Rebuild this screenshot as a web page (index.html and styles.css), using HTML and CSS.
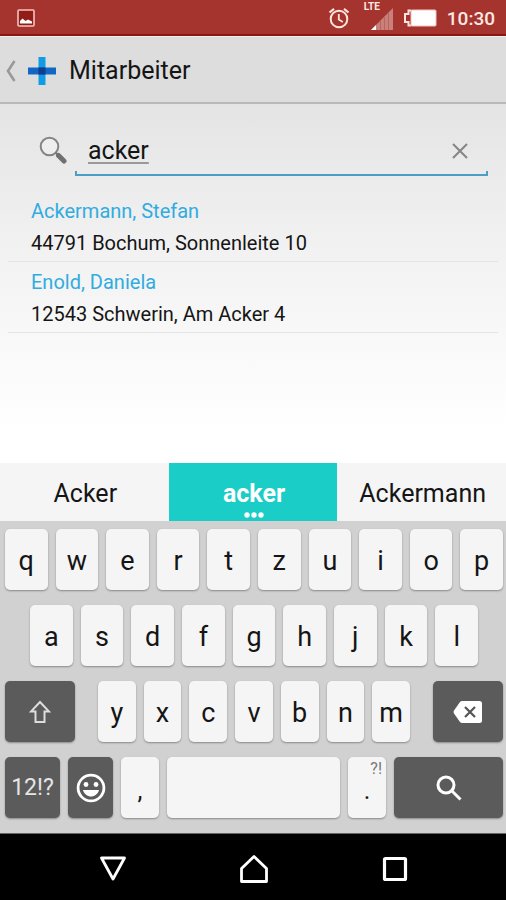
FILE: index.html
```html
<!DOCTYPE html>
<html lang="de">
<head>
<meta charset="utf-8">
<meta name="viewport" content="width=device-width, initial-scale=1">
<title>Mitarbeiter</title>
<link rel="stylesheet" href="styles.css">
</head>
<body>
<div class="status">
  <svg class="status-photo" width="18" height="18" viewBox="0 0 18 18" aria-hidden="true"><rect x="1" y="1" width="16" height="16" rx="1" fill="#921d18" stroke="#f3c4bd" stroke-width="1.6"/><path d="M3 14.500V12l2.500-2.500 3 2.500 2.500-1.500 4 2v2z" fill="#fff"/></svg>
  <div class="status-right">
    <svg width="22" height="22" viewBox="0 0 22 22" fill="none" stroke="#ffe3dc" aria-hidden="true"><circle cx="11" cy="12" r="8.300" stroke-width="2"/><path d="M10.800 7v5.500l4 2.500" stroke-width="1.800"/><path d="M1.500 5.500 6 1.800M20.500 5.500 16 1.800" stroke-width="2.200"/></svg>
    <div class="signal">
      <span class="lte">LTE</span>
      <svg width="22" height="22" viewBox="0 0 22 22" aria-hidden="true"><path d="M0 22 22 0v22z" fill="#c9807a"/><path d="M0 22l5-5v5z" fill="#fff"/><path d="M9.500 12v10M13.500 8v14M17.500 4v18" stroke="#b9655f" stroke-width="1"/></svg>
    </div>
    <svg width="34" height="18" viewBox="0 0 34 18" aria-hidden="true"><path d="M8 1.500H5.500V5H2v8h3.500v3.500H8" fill="none" stroke="#ffe3dc" stroke-width="2"/><rect x="8" y="1" width="25" height="16" rx="1" fill="#fff" stroke="#f3c4bd"/></svg>
    <span class="clock">10:30</span>
  </div>
</div>
<header class="bar">
  <button class="back" aria-label="Zurück"><svg width="12" height="24" viewBox="0 0 12 24"><path d="M9.500 2 3 12l6.500 10" fill="none" stroke="#999" stroke-width="2.600"/></svg></button>
  <svg width="28" height="28" viewBox="0 0 28 28" aria-hidden="true"><path d="M10.500 0h7v28h-7z" fill="#109ce4"/><path d="M0 10.500h28v7H0z" fill="#1168c4"/><path d="M10.500 10.500h7v7h-7z" fill="#123c8c"/></svg>
  <h1>Mitarbeiter</h1>
</header>
<main>
  <form class="search">
    <label for="q" aria-label="Suche"><svg width="28" height="28" viewBox="0 0 28 28"><circle cx="10.500" cy="10.500" r="8.800" fill="#eee" stroke="#858585" stroke-width="2"/><path d="m16.500 16.500 4 4" stroke="#777" stroke-width="2"/><path d="m19.500 19.500 5.500 5.500" stroke="#707070" stroke-width="5" stroke-linecap="round"/></svg></label>
    <div class="field">
      <input id="q" type="text" value="acker">
      <button type="button" class="clear" aria-label="Löschen"><svg width="18" height="18" viewBox="0 0 18 18"><path d="m2 2 14 14M16 2 2 16" stroke="#858585" stroke-width="2"/></svg></button>
    </div>
  </form>
  <ul class="results">
    <li><a href="#">Ackermann, Stefan</a><span>44791 Bochum, Sonnenleite 10</span></li>
    <li><a href="#">Enold, Daniela</a><span>12543 Schwerin, Am Acker 4</span></li>
  </ul>
</main>
<div class="suggest">
  <button>Acker</button>
  <button class="active">acker<svg class="dots" width="20" height="6" viewBox="0 0 20 6" fill="#fff" aria-hidden="true"><circle cx="3" cy="3" r="2.700"/><circle cx="10" cy="3" r="2.700"/><circle cx="17" cy="3" r="2.700"/></svg></button>
  <button>Ackermann</button>
</div>
<div class="keyboard">
  <div class="row row-top"><button>q</button><button>w</button><button>e</button><button>r</button><button>t</button><button>z</button><button>u</button><button>i</button><button>o</button><button>p</button></div>
  <div class="row row-home"><button>a</button><button>s</button><button>d</button><button>f</button><button>g</button><button>h</button><button>j</button><button>k</button><button>l</button></div>
  <div class="row row-shift">
    <button class="dark" aria-label="Umschalt"><svg width="22" height="24" viewBox="0 0 22 24"><path d="M11 2 2 11.500h4.500V22h9V11.500H20z" fill="none" stroke="#ddd" stroke-width="2"/></svg></button>
    <div class="letters"><button>y</button><button>x</button><button>c</button><button>v</button><button>b</button><button>n</button><button>m</button></div>
    <button class="dark" aria-label="Rücktaste"><svg width="30" height="24" viewBox="0 0 30 24"><path d="M9 1h17.500Q29 1 29 3.500v17Q29 23 26.500 23H9Q8 23 7 22L1 13.500Q0 12 1 10.500L7 2Q8 1 9 1z" fill="#fff"/><path d="m12 7 10 10M22 7 12 17" stroke="#555" stroke-width="2.200"/></svg></button>
  </div>
  <div class="row row-bottom">
    <button class="dark numbers">12!?</button>
    <button class="dark" aria-label="Emoji"><svg width="30" height="30" viewBox="0 0 30 30"><circle cx="15" cy="15" r="12.900" fill="none" stroke="#fff" stroke-width="2.800"/><circle cx="10" cy="11.500" r="2.400" fill="#fff"/><circle cx="20" cy="11.500" r="2.400" fill="#fff"/><path d="M7 17h16c-1 4-4.500 6.500-8 6.500S8 21 7 17z" fill="#fff"/></svg></button>
    <button class="mark">,</button>
    <button aria-label="Leerzeichen"></button>
    <button class="mark period">.<small>?!</small></button>
    <button class="dark" aria-label="Suchen"><svg width="28" height="28" viewBox="0 0 28 28" fill="none" stroke="#fff" stroke-width="3"><circle cx="11" cy="11" r="8"/><path d="m16.500 16.500 9 9"/></svg></button>
  </div>
</div>
<nav class="nav">
  <button aria-label="Zurück"><svg width="28" height="28" viewBox="0 0 28 28"><path d="M2.500 3h23L14 24z" fill="none" stroke="#fff" stroke-width="2.800" stroke-linejoin="round"/></svg></button>
  <button aria-label="Start"><svg width="30" height="30" viewBox="0 0 30 30"><path d="M2.500 27.500V14.500L15 2.500l12.500 12v13z" fill="none" stroke="#fff" stroke-width="2.800" stroke-linejoin="round"/></svg></button>
  <button aria-label="Übersicht"><svg width="26" height="26" viewBox="0 0 26 26"><rect x="2.500" y="2.500" width="21" height="21" rx="1" fill="none" stroke="#fff" stroke-width="3.200"/></svg></button>
</nav>
</body>
</html>
```
FILE: styles.css
```css
* { box-sizing: border-box; }
body {
  margin: 0;
  min-height: 100vh;
  display: flex;
  flex-direction: column;
  font-family: Roboto, sans-serif;
  color: #151515;
  background: #fff;
}
button {
  margin: 0;
  padding: 0;
  border: 0;
  background: none;
  font: inherit;
  color: inherit;
}
svg { display: block; flex: none; }

.status {
  height: 36px;
  display: flex;
  align-items: center;
  justify-content: space-between;
  padding: 2px 11px 0 17px;
  background: #a5332e;
  border-bottom: 2px solid #8b1712;
  color: #ffe9e4;
}
.status-right { display: flex; align-items: center; gap: 10px; }
.signal { position: relative; padding: 2px 0 0 7px; margin-left: 4px; }
.lte { position: absolute; left: 0; top: -5px; font-size: 10px; line-height: 12px; font-weight: 700; }
.clock { font-size: 19px; font-weight: 500; }

.bar {
  height: 68px;
  display: flex;
  align-items: center;
  padding: 2px 5px 0;
  background: #ddd;
  border-top: 1px solid #efefef;
  border-bottom: 2px solid #b9b9b9;
}
.back { margin-right: 11px; }
h1 { margin: 0 0 0 13px; font-size: 25px; font-weight: 400; }

main {
  flex: 1;
  padding: 20px 8px 0;
  background: linear-gradient(#e4e4e4, #f0f0f0 35%, #fff 90%);
}
.search { display: flex; padding: 0 10px 0 31px; }
.search label { width: 36px; padding-top: 12px; }
.field {
  position: relative;
  flex: 1;
  display: flex;
  align-items: center;
  height: 52px;
  padding: 3px 19px 0 13px;
  border-bottom: 2px solid #4b9fc7;
}
.field::before, .field::after {
  content: "";
  position: absolute;
  bottom: 0;
  width: 2px;
  height: 3px;
  background: #4b9fc7;
}
.field::before { left: 0; }
.field::after { right: 0; }
.field input {
  flex: 1;
  min-width: 0;
  padding: 0;
  border: 0;
  outline: 0;
  background: none;
  font: 25px Roboto, sans-serif;
  color: #151515;
  text-decoration: underline 2px #999;
  text-underline-offset: 3px;
}
.results { list-style: none; margin: 0; padding: 15px 0 0; font-size: 20px; }
.results li {
  height: 71px;
  padding: 4px 23px 0;
  border-bottom: 1px solid #e4e4e4;
  line-height: 32px;
}
.results a, .results span { display: block; }
.results a { color: #31ace0; text-decoration: none; }

.suggest {
  display: grid;
  grid-template-columns: repeat(3, 1fr);
  height: 58px;
  background: #f5f5f5;
  font-size: 25px;
}
.suggest button { padding: 2px 0 0 2px; }
.suggest .active { position: relative; background: #1acdc7; color: #fff; font-weight: 700; }
.dots { position: absolute; bottom: 3px; left: 50%; margin-left: -9px; }

.keyboard {
  display: grid;
  gap: 15px;
  padding: 8px 3px 15px 5px;
  background: #d1d1d1;
  font-size: 27px;
}
.row, .letters { display: grid; gap: 8px; }
.row { height: 61px; }
.row button {
  display: flex;
  align-items: center;
  justify-content: center;
  padding-top: 2px;
  border-radius: 5px;
  background: #f5f5f5;
  box-shadow: 0 1px 2px #888;
}
.row .dark { padding: 0; background: #5b5b5b; color: #e6e6e6; }
.row-top { grid-template-columns: repeat(10, 1fr); }
.row-home { grid-template-columns: repeat(9, 1fr); padding: 0 25px; }
.row-shift { grid-template-columns: 70fr 312fr 70fr; gap: 23px; }
.letters { grid-template-columns: repeat(7, 1fr); }
.row-bottom { grid-template-columns: 55fr 45fr 38fr 173fr 38fr 109fr; }
.row .numbers { font-size: 23px; }
.row .mark { padding-top: 6px; font-size: 25px; }
.row .period { position: relative; }
.period small { position: absolute; top: 2px; right: 4px; font-size: 16px; color: #777; }

.nav {
  height: 67px;
  display: grid;
  grid-template-columns: repeat(3, 1fr);
  padding: 3px 41px 0 43px;
  background: #000;
  border-top: 1px solid #666;
}
.nav button { display: flex; align-items: center; justify-content: center; }
```
